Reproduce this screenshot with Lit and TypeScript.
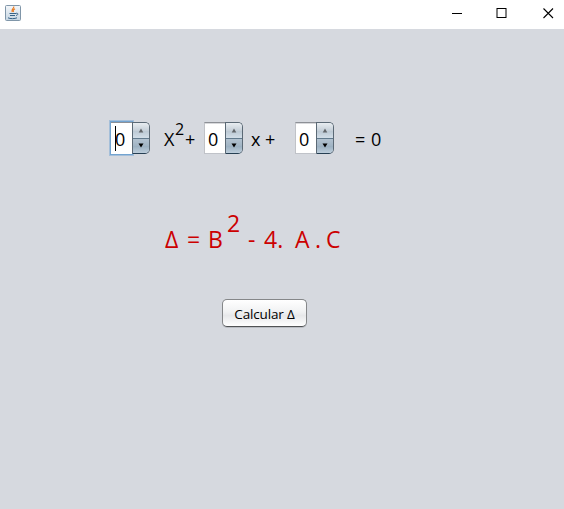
import { LitElement, html, css } from "lit";
import { customElement, property } from "lit/decorators.js";

@customElement("value-spinner")
class ValueSpinner extends LitElement {
  @property({ type: Number }) value = 0;
  @property({ type: Boolean, reflect: true }) active = false;

  static styles = css`
    :host { display: flex; width: 39px; height: 32px; font: 18px/32px "Open Sans", "Noto Sans", sans-serif; color: #000; }
    .field { width: 21px; height: 32px; box-sizing: border-box; background: #fff; border-top: 1px solid #8d9096; border-left: 1px solid #c0c2c7; border-bottom: 1px solid #c0c3c9; box-shadow: inset 0 1px 0 #d8d9dc; padding-left: 3px; line-height: 33px; position: relative; }
    :host([active]) .field { border-width: 1px 0 0 0; padding-left: 4px; box-shadow: 0 0 0 1px #73a4d1, 0 0 0 2px #a5bfd9; }
    .caret { position: absolute; left: 4px; top: 3px; width: 1px; height: 25px; background: #000; }
    .steps { width: 18px; height: 32px; box-sizing: border-box; border: 1px solid #5b6975; border-bottom-color: #263f52; border-radius: 0 5px 5px 0; display: flex; flex-direction: column; overflow: hidden; position: relative; }
    .step { flex: 1; display: flex; align-items: center; justify-content: center; }
    .up { background: linear-gradient(#e8edf1, #c6d0d9 50%, #bac7d2 51%, #d2dee8); border-bottom: 1px solid #60798c; }
    .down { background: linear-gradient(#b2c2d0, #a1b4c4 50%, #9bb0c1 51%, #bccddb); }
    svg { display: block; }
  `;

  render() {
    return html`
      <div class="field">${this.value}${this.active ? html`<div class="caret"></div>` : ""}</div>
      <div class="steps">
        <div class="step up"><svg width="6" height="5"><path d="M3 .5L5.3 4.5H.7Z" fill="#62666a"/></svg></div>
        <div class="step down"><svg width="6" height="5"><path d="M.5 .5H5.5L3 4.5Z" fill="#000"/></svg></div>
      </div>`;
  }
}

type Token = { text: string; width: number; gap: number; sup?: boolean };

@customElement("app-root")
class AppRoot extends LitElement {
  static styles = css`
    :host { display: flex; flex-direction: column; width: 564px; height: 509px; overflow: hidden; background: #d6d9df; font-family: "Open Sans", "Noto Sans", sans-serif; color: #000; }
    .titlebar { height: 29px; background: #fff; display: flex; justify-content: space-between; box-sizing: border-box; padding-left: 5px; flex: none; }
    .logo { margin-top: 5px; }
    .controls { display: flex; margin-right: -7px; }
    .controls svg { width: 45.5px; flex: none; }
    svg { display: block; }
    .row { display: flex; align-items: flex-start; white-space: nowrap; flex: none; }
    .equation { margin: 93px 0 0 111px; height: 32px; font-size: 18px; line-height: 34px; }
    .token { flex: none; }
    .equation .sup { font-size: 16px; line-height: 15px; }
    .formula { margin: 54px 0 0 165px; height: 60px; font-size: 23px; line-height: 62px; color: #c00; }
    .formula .sup { line-height: 31px; }
    .calc { margin: 31px 0 0 222px; width: 85px; height: 28px; box-sizing: border-box; flex: none; padding: 0; border: 1px solid #858789; border-bottom-color: #505255; border-radius: 5px; background: linear-gradient(#fff, #f1f2f3 45%, #e7e8ea 60%, #fff); box-shadow: 0 1px 0 #b9bcc2; font: 13.5px/28px "Open Sans", "Noto Sans", sans-serif; color: #000; letter-spacing: -0.15px; }
  `;

  token(t: Token) {
    return html`<span class="token ${t.sup ? "sup" : ""}" style="width:${t.width}px;margin-left:${t.gap}px">${t.text}</span>`;
  }

  render() {
    const formula: Token[] = [
      { text: "Δ", width: 15, gap: 0 },
      { text: "=", width: 13, gap: 7 },
      { text: "B", width: 14, gap: 8 },
      { text: "2", width: 13, gap: 5, sup: true },
      { text: "-", width: 8, gap: 8 },
      { text: "4.", width: 20, gap: 8 },
      { text: "A", width: 15, gap: 11 },
      { text: ".", width: 6, gap: 5 },
      { text: "C", width: 15, gap: 5 },
    ];
    return html`
      <div class="titlebar">
        <svg class="logo" width="16" height="16" viewBox="0 0 16 16">
          <defs><linearGradient id="g" x2="0" y2="1"><stop stop-color="#f4f7fa"/><stop offset="1" stop-color="#c5d5e2"/></linearGradient></defs>
          <rect x=".5" y=".5" width="15" height="15" rx="1" fill="url(#g)" stroke="#8096a9"/>
          <path d="M8.7 1.5C9.5 3.5 5.7 4.1 7.2 7M10 3.8C7.7 5 8 5.5 8.5 7" fill="none" stroke="#e9781c" stroke-width="1.2"/>
          <path d="M4.5 8.5H11M5 10.5H10M3 12.8C5 14 10 13.8 12 12.8M11 8.3C13.8 8 13.3 10 11 10.5" fill="none" stroke="#376387" stroke-width="1"/>
        </svg>
        <div class="controls">
          <svg height="29" viewBox="0 0 45.5 29"><path d="M17 13.5H27" stroke="#000"/></svg>
          <svg height="29" viewBox="0 0 45.5 29"><rect x="17" y="8.5" width="9" height="9" fill="none" stroke="#000"/></svg>
          <svg height="29" viewBox="0 0 45.5 29"><path d="M17.5 8.5L27 18M27 8.5L17.5 18" stroke="#000" stroke-width="1.1"/></svg>
        </div>
      </div>
      <div class="row equation">
        <value-spinner active .value=${0}></value-spinner>
        ${this.token({ text: "X", width: 11, gap: 14 })}
        ${this.token({ text: "2", width: 9, gap: 0, sup: true })}
        ${this.token({ text: "+", width: 11, gap: 1 })}
        <value-spinner style="margin-left:8px" .value=${0}></value-spinner>
        ${this.token({ text: "x", width: 9, gap: 8 })}
        ${this.token({ text: "+", width: 11, gap: 5 })}
        <value-spinner style="margin-left:19px" .value=${0}></value-spinner>
        ${this.token({ text: "=", width: 11, gap: 21 })}
        ${this.token({ text: "0", width: 11, gap: 5 })}
      </div>
      <div class="row formula">${formula.map((t) => this.token(t))}</div>
      <button class="calc">Calcular Δ</button>
    `;
  }
}
